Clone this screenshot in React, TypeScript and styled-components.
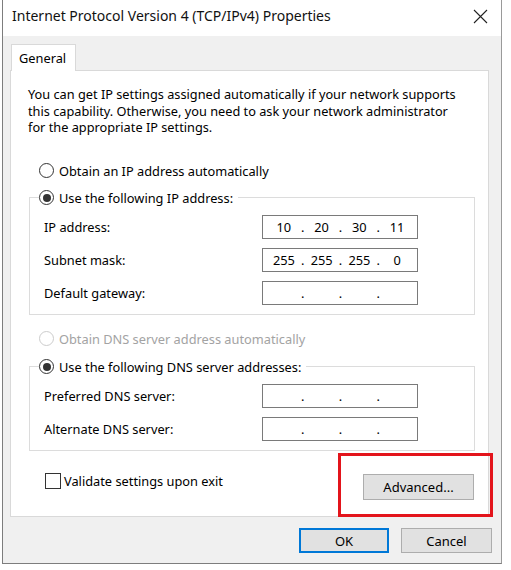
import React from "react";
import styled, { createGlobalStyle } from "styled-components";

const GlobalStyle = createGlobalStyle`
  html, body {
    margin: 0;
    padding: 0;
    background: #ffffff;
  }
  body {
    font-family: "Noto Sans", "Open Sans", sans-serif;
    font-size: 12.8px;
    color: #000;
  }
  * { box-sizing: border-box; }
`;

const Window = styled.div`
  position: relative;
  width: 500px;
  height: 564px;
  margin-left: 2px;
  border-left: 1px solid #7d7d7d;
  border-right: 1px solid #9a9a9a;
  border-bottom: 1px solid #7d7d7d;
  display: flex;
  flex-direction: column;
  background: #f0f0f0;
`;

const TitleBar = styled.div`
  height: 36px;
  flex: none;
  background: #ffffff;
  display: flex;
  align-items: center;
  justify-content: space-between;
  padding: 0 13px 0 9px;
`;

const Title = styled.div`
  font-size: 14px;
  color: #111;
  line-height: 20px;
  margin-top: -4px;
`;

const CloseIcon = styled.svg`
  width: 15px;
  height: 15px;
  margin-top: -4px;
`;

const Body = styled.div`
  flex: 1;
  padding: 8px 0 0 7px;
  display: flex;
  flex-direction: column;
`;

const Tab = styled.div`
  position: relative;
  z-index: 1;
  width: 65px;
  height: 27px;
  margin-left: 1px;
  margin-bottom: -1px;
  background: #ffffff;
  border: 1px solid #d9d9d9;
  border-bottom: none;
  padding: 4px 0 0 7px;
  line-height: 18px;
`;

const Panel = styled.div`
  width: 479px;
  height: 447px;
  background: #ffffff;
  border: 1px solid #d9d9d9;
  padding: 15px 12px 0 17px;
  display: flex;
  flex-direction: column;
`;

const Description = styled.p`
  margin: 0;
  font-size: 12.75px;
  line-height: 16.5px;
`;

const RadioRow = styled.div<{ $disabled?: boolean; $top?: number }>`
  display: flex;
  align-items: center;
  height: 16px;
  margin-top: ${(p) => p.$top ?? 0}px;
  margin-left: ${(p) => (p.$top !== undefined ? 11 : 0)}px;
  color: ${(p) => (p.$disabled ? "#a3a3a3" : "#000")};
  white-space: nowrap;
`;

const RadioCircle = styled.span<{ $checked?: boolean; $disabled?: boolean }>`
  width: 15px;
  height: 15px;
  border-radius: 50%;
  border: 1px solid ${(p) => (p.$disabled ? "#cccccc" : "#333333")};
  background: #fff;
  display: flex;
  align-items: center;
  justify-content: center;
  margin-right: 5px;
  flex: none;

  &::after {
    content: "";
    display: ${(p) => (p.$checked ? "block" : "none")};
    width: 8px;
    height: 8px;
    border-radius: 50%;
    background: #333333;
  }
`;

const Group = styled.fieldset<{ $top: number }>`
  margin: ${(p) => p.$top}px 0 0 1px;
  width: 446px;
  border: 1px solid #dcdcdc;
  padding: 9px 0 9px 14px;
  min-width: 0;
`;

const Legend = styled.legend`
  margin-left: -5px;
  padding: 0 5px 0 0;
`;

const FieldGrid = styled.div`
  display: grid;
  grid-template-columns: 218px 156px;
  row-gap: 9px;
  align-items: center;
`;

const FieldLabel = styled.div`
  line-height: 16px;
`;

const IpBox = styled.div`
  height: 24px;
  border: 1px solid #7a7a7a;
  display: grid;
  grid-template-columns: 1fr 4px 1fr 4px 1fr 4px 1fr;
  align-items: center;
  padding: 0 3px 0 4px;
  line-height: 20px;
`;

const Segment = styled.span`
  text-align: center;
`;

const Dot = styled.span`
  text-align: center;
`;

const BottomRow = styled.div`
  display: flex;
  justify-content: space-between;
  align-items: flex-start;
  margin-top: 22px;
  padding: 0 2px 0 17px;
`;

const CheckRow = styled.div`
  display: flex;
  align-items: center;
  height: 16px;
`;

const CheckBox = styled.span`
  width: 16px;
  height: 16px;
  border: 1px solid #333;
  background: #fff;
  margin-right: 3px;
`;

const Button = styled.button<{ $default?: boolean; $width: number }>`
  width: ${(p) => p.$width}px;
  height: ${(p) => (p.$default ? 25 : 26)}px;
  background: #e1e1e1;
  border: ${(p) => (p.$default ? "2px solid #0078d7" : "1px solid #adadad")};
  font-family: inherit;
  font-size: 13px;
  color: #000;
  padding: 0;
  line-height: 18px;
`;

const AdvancedButton = styled(Button)`
  margin-top: 1px;
`;

const Footer = styled.div`
  display: flex;
  justify-content: flex-end;
  gap: 12px;
  margin-top: 11px;
  padding-right: 9px;
`;

const Highlight = styled.div`
  position: absolute;
  left: 335px;
  top: 453px;
  width: 155px;
  height: 64px;
  border: 3px solid #e3141b;
  pointer-events: none;
`;

function Radio({
  label,
  checked,
  disabled,
  top,
}: {
  label: string;
  checked?: boolean;
  disabled?: boolean;
  top?: number;
}) {
  return (
    <RadioRow $disabled={disabled} $top={top}>
      <RadioCircle $checked={checked} $disabled={disabled} />
      {label}
    </RadioRow>
  );
}

function IpField({ parts }: { parts: string[] }) {
  return (
    <IpBox>
      <Segment>{parts[0]}</Segment>
      <Dot>.</Dot>
      <Segment>{parts[1]}</Segment>
      <Dot>.</Dot>
      <Segment>{parts[2]}</Segment>
      <Dot>.</Dot>
      <Segment>{parts[3]}</Segment>
    </IpBox>
  );
}

const empty = ["", "", "", ""];

export default function App() {
  return (
    <>
      <GlobalStyle />
      <Window>
        <TitleBar>
          <Title>Internet Protocol Version 4 (TCP/IPv4) Properties</Title>
          <CloseIcon viewBox="0 0 15 15">
            <path d="M1 1 L14 14 M14 1 L1 14" stroke="#222" strokeWidth="1.1" fill="none" />
          </CloseIcon>
        </TitleBar>
        <Body>
          <Tab>General</Tab>
          <Panel>
            <Description>
              You can get IP settings assigned automatically if your network supports
              <br />
              this capability. Otherwise, you need to ask your network administrator
              <br />
              for the appropriate IP settings.
            </Description>

            <Radio label="Obtain an IP address automatically" top={27} />

            <Group $top={11}>
              <Legend>
                <Radio label="Use the following IP address:" checked />
              </Legend>
              <FieldGrid>
                <FieldLabel>IP address:</FieldLabel>
                <IpField parts={["10", "20", "30", "11"]} />
                <FieldLabel>Subnet mask:</FieldLabel>
                <IpField parts={["255", "255", "255", "0"]} />
                <FieldLabel>Default gateway:</FieldLabel>
                <IpField parts={empty} />
              </FieldGrid>
            </Group>

            <Radio label="Obtain DNS server address automatically" disabled top={16} />

            <Group $top={12}>
              <Legend>
                <Radio label="Use the following DNS server addresses:" checked />
              </Legend>
              <FieldGrid>
                <FieldLabel>Preferred DNS server:</FieldLabel>
                <IpField parts={empty} />
                <FieldLabel>Alternate DNS server:</FieldLabel>
                <IpField parts={empty} />
              </FieldGrid>
            </Group>

            <BottomRow>
              <CheckRow>
                <CheckBox />
                Validate settings upon exit
              </CheckRow>
              <AdvancedButton $width={111}>Advanced...</AdvancedButton>
            </BottomRow>
          </Panel>
          <Footer>
            <Button $default $width={90}>
              OK
            </Button>
            <Button $width={91} style={{ height: 25 }}>
              Cancel
            </Button>
          </Footer>
        </Body>
        <Highlight />
      </Window>
    </>
  );
}
